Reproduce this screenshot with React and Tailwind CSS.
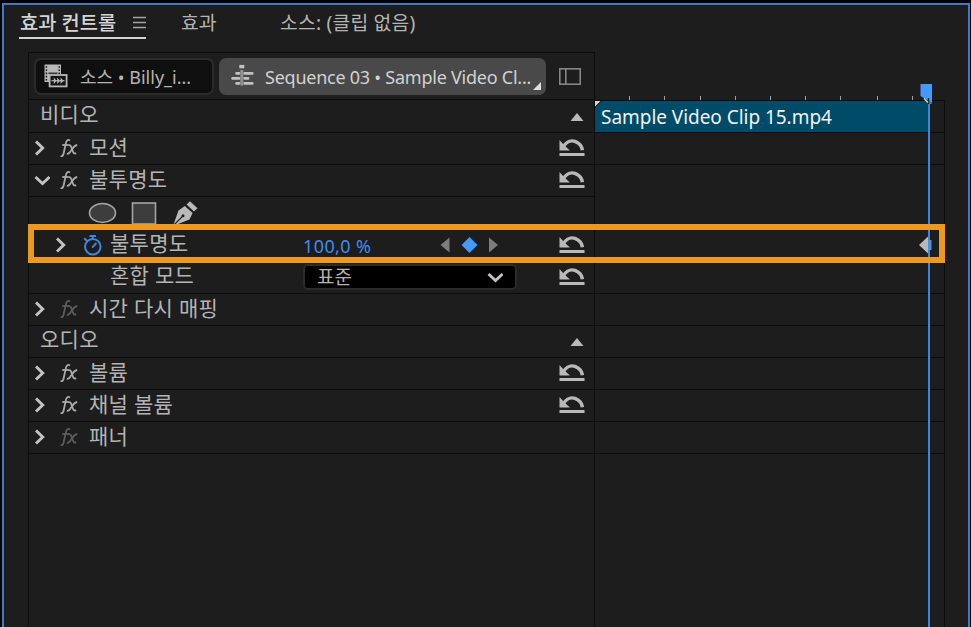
import clsx from "clsx";

const ticks = [629, 664, 700, 735, 770, 805, 840, 877, 912];

function Chevron({ open }) {
  return (
    <svg width="16" height="16" viewBox="0 0 16 16" className="shrink-0">
      <path
        d={open ? "M1.5 5 L8.5 11.5 L15.5 5" : "M4 1.5 L10.7 8 L4 14.5"}
        fill="none"
        stroke="#c3c3c3"
        strokeWidth="2.9"
      />
    </svg>
  );
}

function ResetIcon() {
  return (
    <svg width="26" height="20" viewBox="0 0 26 20" className="shrink-0">
      <path d="M0.5 2 V12.6 H11 L7.6 9.6 L3.6 5.6 Z" fill="#b9b9b9" />
      <path d="M4 9 C8 3 12.5 2 16.5 3.6 C20.5 5.2 22.8 8 23.4 12.2" fill="none" stroke="#b9b9b9" strokeWidth="3.4" />
      <rect x="0.5" y="15" width="25" height="3" fill="#b9b9b9" />
    </svg>
  );
}

function FxIcon({ dim }) {
  return (
    <svg
      width="18"
      height="20"
      viewBox="0 0 18 20"
      className={clsx("shrink-0", dim ? "text-[#5c5c5c]" : "text-[#a9a9a9]")}
      fill="none"
      stroke="currentColor"
      strokeWidth="1.8"
    >
      <path d="M10 2.4 C7.8 1 6.5 2.4 6 4.6 L3.6 15.5 C3.1 17.6 2.2 18.6 0.6 18" />
      <path d="M2.2 7 H8.8" />
      <path d="M8.4 7.4 C10.8 6.4 11.2 9 12.2 11.6 C13.1 14.6 13.6 16 16.2 15.4" />
      <path d="M17.2 7 C14.8 7.2 12.6 10.2 11.2 12.4 C10 14.6 8.8 16.2 6.8 15.8" />
    </svg>
  );
}

function Stopwatch() {
  return (
    <svg width="20" height="22" viewBox="0 0 20 22" className="shrink-0" fill="none" stroke="#3f86dc" strokeWidth="2">
      <circle cx="9.8" cy="12.8" r="7.8" />
      <path d="M6.5 2 H13 M9.8 2 V5.5 M9.2 13.6 L13.4 9 M1.2 4.2 L4.4 7.2" />
    </svg>
  );
}

function SourceIcon() {
  return (
    <svg width="24" height="24" viewBox="0 0 24 24" className="shrink-0">
      <path d="M0.5 0.5 H17 V10 H5 V18 H0.5 Z" fill="#b8b8b8" />
      <path d="M2.4 2.2 V17 M15.2 2.2 V10" stroke="#1b1b1b" strokeWidth="1.5" strokeDasharray="1.6 1.6" />
      <path d="M4.4 9.2 H13.5" stroke="#1b1b1b" strokeWidth="1.2" />
      <rect x="5.6" y="11" width="17" height="11.4" fill="#151515" stroke="#b8b8b8" strokeWidth="1.8" />
      <path d="M7.5 16.7 H20.5" stroke="#b8b8b8" strokeWidth="1.2" />
      <path d="M9.8 13.5 V19.9 L12.5 16.7 Z M13.2 13.5 V19.9 L16 16.7 Z M16.6 13.5 V19.9 L19.4 16.7 Z" fill="#b8b8b8" />
    </svg>
  );
}

function SequenceIcon() {
  return (
    <svg width="24" height="24" viewBox="0 0 24 24" className="shrink-0" stroke="#c2c2c2" strokeWidth="2.8" strokeLinecap="round">
      <path d="M6.6 9.4 H9 M14.6 9.4 H22.2 M2.6 14.4 H9 M14.6 14.4 H18 M6.6 19.4 H9 M14.6 19.4 H22.2" />
      <path d="M11.8 6 V21.5" stroke="#929292" strokeWidth="3" strokeLinecap="butt" />
      <rect x="10" y="1.6" width="3.6" height="2" fill="#c2c2c2" strokeWidth="1.4" />
    </svg>
  );
}

function MaskTools() {
  return (
    <div className="flex items-center pl-[59px] pt-[1px]">
      <svg width="112" height="28" viewBox="0 0 112 28">
        <ellipse cx="14.5" cy="15" rx="13" ry="9.5" fill="#3d3d3d" stroke="#a5a5a5" strokeWidth="1.6" />
        <rect x="44.5" y="5" width="23" height="21" fill="#3d3d3d" stroke="#a5a5a5" strokeWidth="1.6" />
        <path d="M98.5 6.5 L102 3.2 L109.5 10.3 L106 13.6 Z" fill="#b9b9b9" />
        <path d="M96.8 8 L104.6 15 L101.5 21.5 L85 28 L90.5 12.5 Z" fill="#b9b9b9" />
        <path d="M85 28 L94.5 18.4" stroke="#1d1d1d" strokeWidth="1.2" />
        <circle cx="95" cy="17.8" r="1.5" fill="#1d1d1d" />
      </svg>
    </div>
  );
}

function GroupRow({ label, tall }) {
  return (
    <div
      className={clsx(
        "flex items-center border-b border-[#0c0c0c] pl-[11px] pr-[10px]",
        tall ? "h-[33px]" : "h-8 pb-[2px]"
      )}
    >
      <span className="mb-[3px] flex-1">{label}</span>
      <svg width="14" height="8" viewBox="0 0 14 8" className={tall ? "mt-px" : "mt-[3px]"}>
        <path d="M7 0 L13.5 8 H0.5 Z" fill="#b9b9b9" />
      </svg>
    </div>
  );
}

function EffectRow({ label, open, dim, reset }) {
  return (
    <div className="flex h-8 items-center border-b border-[#0c0c0c] pb-[2px] pl-[3px] pr-[9px]">
      <div className={clsx("flex", open && "translate-x-[2px]")}>
        <Chevron open={open} />
      </div>
      <div className="ml-[12px]">
        <FxIcon dim={dim} />
      </div>
      <span className="mb-px ml-[11px] flex-1">{label}</span>
      {reset && <ResetIcon />}
    </div>
  );
}

function PropertyRow() {
  return (
    <div className="flex h-8 items-center pl-[24px] pr-[9px]">
      <Chevron />
      <div className="ml-[14px]">
        <Stopwatch />
      </div>
      <span className="mb-[3px] ml-[7px] w-[193px]">불투명도</span>
      <span className="mt-[2px] w-[137px] text-[18px] tracking-[0.4px] text-[#3f8cf0]">100,0 %</span>
      <svg width="58" height="16" viewBox="0 0 58 16">
        <path d="M9.5 0.5 V15.5 L0.5 8 Z M49 0.5 V15.5 L58 8 Z" fill="#7d7d7d" />
        <path d="M29.5 0 L37.5 8 L29.5 16 L21.5 8 Z" fill="#4499fa" />
      </svg>
      <div className="flex flex-1 justify-end">
        <ResetIcon />
      </div>
    </div>
  );
}

function BlendRow() {
  return (
    <div className="flex h-[33px] items-center border-b border-[#0c0c0c] pl-[81px] pr-[9px]">
      <span className="mb-[3px] w-[193px]">혼합 모드</span>
      <div className="flex h-[26px] w-[214px] items-center justify-between rounded-[5px] border-2 border-[#2b2b2b] bg-black pl-3 pr-[12px] text-[19px] tracking-normal">
        <span>표준</span>
        <Chevron open />
      </div>
      <div className="flex flex-1 justify-end">
        <ResetIcon />
      </div>
    </div>
  );
}

function SourceBar() {
  return (
    <div className="flex h-[47px] items-center border-b border-[#0c0c0c] pl-[5px] text-[18px] tracking-normal">
      <div className="flex h-[37px] w-[180px] items-center rounded-[7px] border-2 border-[#2b2b2b] bg-[#0f0f0f] pl-[8px]">
        <SourceIcon />
        <span className="ml-[12px] mt-px whitespace-nowrap">소스 • Billy_i...</span>
      </div>
      <div className="relative ml-[5px] flex h-[37px] w-[327px] items-center rounded-[7px] bg-[#494949] pl-[11px] text-[#d2d2d2]">
        <SequenceIcon />
        <span className="ml-[11px] mt-px whitespace-nowrap tracking-[-0.24px]">Sequence 03 • Sample Video Cl...</span>
        <svg width="8" height="8" viewBox="0 0 8 8" className="absolute bottom-[5px] right-[5px]">
          <path d="M8 0 V8 H0 Z" fill="#e0e0e0" />
        </svg>
      </div>
      <svg width="22" height="17" viewBox="0 0 22 17" className="ml-[13px]" fill="none" stroke="#8c8c8c" strokeWidth="1.5">
        <rect x="0.8" y="0.8" width="20.4" height="15.4" />
        <path d="M6.8 1 V16" />
      </svg>
    </div>
  );
}

function Timeline() {
  return (
    <div className="relative w-[350px]">
      <svg width="350" height="48" viewBox="595 52 350 48" className="block">
        {ticks.map((x) => (
          <path key={x} d={`M${x + 0.5} 96 V101`} stroke="#a0a0a0" />
        ))}
      </svg>
      <div className="h-[527px] border-r border-t border-[#0c0c0c]">
        <div className="flex h-[31px] w-[334px] items-center bg-[#004c68] pl-[6px] text-[19px] tracking-[-0.04px] text-[#f2f2f2]">
          <span className="mt-px whitespace-nowrap">Sample Video Clip 15.mp4</span>
        </div>
        <div className="h-px bg-[#0c0c0c]" />
        <div className="h-8 border-b border-[#0c0c0c]" />
        <div className="h-[129px] border-b border-[#0c0c0c]" />
        <div className="h-8 border-b border-[#0c0c0c]" />
        <div className="h-8 border-b border-[#0c0c0c]" />
        <div className="h-8 border-b border-[#0c0c0c]" />
        <div className="h-8 border-b border-[#0c0c0c]" />
        <div className="h-8 border-b border-[#0c0c0c]" />
      </div>
      {/* clip start marker, keyframe and playhead */}
      <svg width="350" height="575" viewBox="595 52 350 575" className="absolute left-0 top-0">
        <path d="M595 101 H602 L595 108 Z" fill="#1d1d1d" />
        <path d="M595 101 H600.5 L595 106.5 Z" fill="#d8d8d8" />
        <path d="M920.5 84 H932 V103 L920.5 96 Z" fill="#4499fa" />
        <path d="M928 99 L932 104 H930 V627 H928 Z" fill="#3f86dc" />
        <path d="M928.5 98 V104" stroke="#1d1d1d" strokeWidth="1.5" />
        <path d="M924 98.5 L928 102.5" stroke="#d8d8d8" strokeWidth="1.5" />
        <path d="M919 245 L928 236.5 V253.5 Z" fill="#b9b9b9" />
        <rect x="928" y="240" width="3.5" height="10" fill="#4f8fdb" />
      </svg>
    </div>
  );
}

export default function App() {
  return (
    <div className="relative h-[627px] w-[971px] overflow-hidden bg-black pl-[2px] pt-[3px] font-['Noto_Sans','Noto_Sans_CJK_KR',sans-serif] text-[21px] leading-none text-[#b4b4b4]">
      <div className="h-[624px] w-[968px] border-x-2 border-t-2 border-[#3c7cc4] bg-[#1d1d1d]">
        <div className="flex h-[47px] items-start pl-[15px] text-[19.3px]">
          <div className="flex h-[34px] w-[127px] items-start justify-between border-b-2 border-[#d4d4d4] pl-[1px] pt-[8px] font-medium text-[#d4d4d4]">
            <span className="whitespace-nowrap text-[19.8px]">효과 컨트롤</span>
            <svg width="13" height="13" viewBox="0 0 13 13" className="mt-[3px]" stroke="#a5a5a5" strokeWidth="1.6">
              <path d="M0 1.5 H13 M0 6.5 H13 M0 11.5 H13" />
            </svg>
          </div>
          <span className="ml-[35px] w-[99px] pt-[8px]">효과</span>
          <span className="whitespace-nowrap pt-[8px] tracking-[0.2px]">소스: (클립 없음)</span>
        </div>
        <div className="flex pl-6">
          <div className="h-[575px] w-[567px] border-x border-t border-[#0c0c0c] tracking-[0.3px]">
            <SourceBar />
            <GroupRow label="비디오" tall />
            <EffectRow label="모션" reset />
            <EffectRow label="불투명도" open reset />
            <div className="h-8">
              <MaskTools />
            </div>
            <PropertyRow />
            <BlendRow />
            <EffectRow label="시간 다시 매핑" dim />
            <GroupRow label="오디오" />
            <EffectRow label="볼륨" reset />
            <EffectRow label="채널 볼륨" reset />
            <EffectRow label="패너" dim />
          </div>
          <Timeline />
        </div>
      </div>
      {/* highlight over the opacity property */}
      <div className="absolute left-[28px] top-[224px] h-[39px] w-[917px] border-[6px] border-[#ed981f]" />
    </div>
  );
}
